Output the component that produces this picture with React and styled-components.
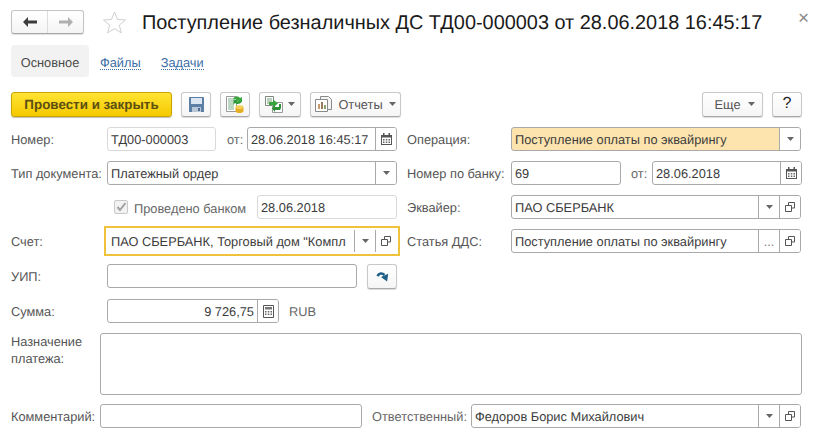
import React from 'react'
import styled, { createGlobalStyle } from 'styled-components'

const GlobalStyle = createGlobalStyle`
  html, body {
    margin: 0;
    background: #fff;
  }
  body {
    font-family: "Liberation Sans", Arial, sans-serif;
    font-size: 12.8px;
    color: #4d4d4d;
    text-rendering: geometricPrecision;
  }
`

const Page = styled.div`
  width: 818px;
  height: 438px;
  box-sizing: border-box;
  padding: 10px 16px 0 11px;
  overflow: hidden;
`

const Header = styled.header`
  display: flex;
  align-items: center;
  height: 24px;
`

const NavGroup = styled.div`
  display: flex;
  width: 73px;
  height: 24px;
  box-sizing: border-box;
  border: 1px solid #c4c4c4;
  border-bottom-color: #a6a6a6;
  border-radius: 3px;
  background: linear-gradient(#fff, #f4f4f4);
  box-shadow: 0 1px 1px rgba(0, 0, 0, 0.12);
`

const NavButton = styled.div`
  flex: 1;
  display: flex;
  align-items: center;
  justify-content: center;
  & + & {
    border-left: 1px solid #dcdcdc;
  }
`

const StarBox = styled.div`
  margin-left: 18px;
  width: 25px;
  height: 25px;
`

const Title = styled.h1`
  margin: 1px 0 0 15px;
  font-size: 19.9px;
  font-weight: 400;
  line-height: 24px;
  color: #1a1a1a;
  white-space: nowrap;
`

const Close = styled.div`
  margin-left: auto;
  margin-right: -7px;
  margin-top: -6px;
  font-size: 19px;
  line-height: 14px;
  color: #8a8a8a;
`

const Tabs = styled.nav`
  display: flex;
  align-items: center;
  margin-top: 11px;
  height: 32px;
`

const ActiveTab = styled.div`
  width: 78px;
  height: 32px;
  line-height: 35px;
  text-align: center;
  background: #f2f2f2;
  border-radius: 4px;
  color: #4a4a4a;
`

const TabLink = styled.a`
  margin-left: ${p => p.$gap}px;
  color: #3a6ea5;
  border-bottom: 1px dotted #3a6ea5;
  line-height: 13px;
  margin-top: 4px;
`

const Toolbar = styled.div`
  display: flex;
  align-items: center;
  margin-top: 14px;
  height: 26px;
`

const PrimaryButton = styled.div`
  width: 161px;
  height: 25px;
  box-sizing: border-box;
  border: 1px solid #c9a400;
  border-radius: 3px;
  background: linear-gradient(#ffe433, #f5c900);
  box-shadow: 0 1px 1px rgba(0, 0, 0, 0.25);
  color: #5c4f10;
  font-weight: 700;
  font-size: 13.4px;
  line-height: 24px;
  text-align: center;
`

const ToolButton = styled.div`
  display: flex;
  align-items: center;
  justify-content: center;
  gap: ${p => p.$gap || 0}px;
  flex: none;
  width: ${p => p.$w}px;
  height: 25px;
  margin-left: ${p => p.$gap2 ?? 9}px;
  padding-left: ${p => p.$pl || 0}px;
  box-sizing: border-box;
  border: 1px solid #c8c8c8;
  border-bottom-color: #a8a8a8;
  border-radius: 3px;
  background: linear-gradient(#fff, #f5f5f5);
  box-shadow: 0 1px 1px rgba(0, 0, 0, 0.14);
  color: #555;
`

const Spacer = styled.div`
  flex: 1;
`

const HelpMark = styled.span`
  font-size: 16px;
  color: #222;
`

const Columns = styled.div`
  display: flex;
  margin-top: 10px;
`

const LeftColumn = styled.div`
  width: 386px;
  flex: none;
`

const RightColumn = styled.div`
  margin-left: 10px;
  width: 395px;
  flex: none;
`

const Row = styled.div`
  display: flex;
  align-items: flex-start;
  height: ${p => p.$h || 34}px;
`

const Label = styled.label`
  flex: none;
  width: ${p => p.$w}px;
  line-height: 26px;
  color: #555;
  white-space: nowrap;
`

const Field = styled.div`
  display: flex;
  flex: none;
  width: ${p => p.$w}px;
  height: 24px;
  margin-left: ${p => p.$ml || 0}px;
  box-sizing: border-box;
  border: 1px solid ${p => (p.$focus ? 'transparent' : p.$soft ? '#d9d9d9' : '#a9a9a9')};
  border-radius: ${p => (p.$focus ? 0 : 3)}px;
  background: ${p => p.$bg || '#fff'};
  outline: ${p => (p.$focus ? '2px solid #f0c23c' : 'none')};
  outline-offset: 1px;
`

const Value = styled.div`
  flex: 1;
  min-width: 0;
  padding: 0 ${p => (p.$right ? 3 : 0)}px 0 3px;
  line-height: 24px;
  color: #3c3c3c;
  text-align: ${p => (p.$right ? 'right' : 'left')};
  white-space: nowrap;
  overflow: hidden;
`

const FieldButton = styled.div`
  flex: none;
  width: 20px;
  display: flex;
  align-items: center;
  justify-content: center;
  border-left: 1px solid #a9a9a9;
  border-radius: 0 2px 2px 0;
  background: #fff;
  color: #777;
`

const Small = styled.span`
  line-height: 26px;
  color: #666;
  margin-left: ${p => p.$ml}px;
  width: ${p => p.$w}px;
  flex: none;
  white-space: nowrap;
`

const CheckWrap = styled.div`
  display: flex;
  align-items: center;
  height: 26px;
  margin-left: 96px;
  width: 150px;
  padding-left: 7px;
  box-sizing: border-box;
  flex: none;
  color: #666;
  white-space: nowrap;
`

const CheckBox = styled.div`
  width: 14px;
  height: 14px;
  margin-right: 6px;
  margin-top: -2px;
  box-sizing: border-box;
  border: 1px solid #c8c8c8;
  border-radius: 2px;
  background: #f2f2f2;
  display: flex;
  align-items: center;
  justify-content: center;
`

const TextArea = styled.div`
  width: 702px;
  height: 62px;
  box-sizing: border-box;
  border: 1px solid #a9a9a9;
  border-radius: 3px;
`

const NoteLabel = styled.div`
  width: 89px;
  flex: none;
  padding-top: 1px;
  line-height: 16.5px;
  color: #555;
`

const Caret = () => (
  <svg width="7" height="4" viewBox="0 0 7 4">
    <path d="M0 0h7L3.500 4z" fill="#666" />
  </svg>
)

const ArrowLeft = () => (
  <svg width="14" height="10" viewBox="0 0 14 10">
    <path d="M0 5l5-5v3.500h9v3H5V10z" fill="#3c3c3c" />
  </svg>
)

const ArrowRight = () => (
  <svg width="14" height="10" viewBox="0 0 14 10">
    <path d="M14 5L9 0v3.500H0v3h9V10z" fill="#b0b0b0" />
  </svg>
)

const Star = () => (
  <svg width="25" height="25" viewBox="0 0 25 25">
    <path
      d="M12.500 2l3 7.400 8 .6-6.200 5.100 2 7.800-6.800-4.300-6.800 4.300 2-7.800L1.500 10l8-.6z"
      fill="#fff"
      stroke="#cfcfcf"
    />
  </svg>
)

const OpenIcon = () => (
  <svg width="10" height="10" viewBox="0 0 10 10" fill="none" stroke="#555">
    <path d="M3.500 3.500V.5h6v5.500h-3" />
    <path d="M.5 3.500h6v6H.5z" />
  </svg>
)

const CalendarIcon = () => (
  <svg width="11" height="12" viewBox="0 0 11 12">
    <path d="M0 2h11v10H0z" fill="#555" />
    <path d="M1 4.500h9V11H1z" fill="#fff" />
    <path d="M2 0h1.500v3H2zM7.500 0H9v3H7.500z" fill="#555" />
    <path d="M2 6h1.500v1.500H2zM4.800 6h1.500v1.500H4.800zM7.500 6H9v1.500H7.500zM2 8.500h1.500V10H2zM4.800 8.500h1.500V10H4.800zM7.500 8.500H9V10H7.500z" fill="#666" />
  </svg>
)

const CalcIcon = () => (
  <svg width="11" height="13" viewBox="0 0 11 13">
    <path d="M.5.500h10v12H.5z" fill="#fff" stroke="#555" />
    <path d="M2 2h7v2.500H2z" fill="#777" />
    <path d="M2 6h1.500v1.500H2zM4.800 6h1.500v1.500H4.800zM7.500 6H9v1.500H7.500zM2 8.500h1.500V10H2zM4.800 8.500h1.500V10H4.800zM7.500 8.500H9V10H7.500z" fill="#666" />
  </svg>
)

const SaveIcon = () => (
  <svg width="15" height="15" viewBox="0 0 15 15">
    <path d="M0 1a1 1 0 0 1 1-1h13a1 1 0 0 1 1 1v14H0z" fill="#5c7fa6" />
    <path d="M2 1h11v6H2z" fill="#dbe6f0" />
    <path d="M3 10h9v5H3z" fill="#b9c8d8" />
    <path d="M9 11h2v3H9z" fill="#4d6c8f" />
  </svg>
)

const PostIcon = () => (
  <svg width="18" height="17" viewBox="0 0 18 17">
    <path d="M.5.500h10v15H.5z" fill="#fff" stroke="#9a9a9a" />
    <path d="M2 3h7M2 5h7M2 7h6M2 9h6M2 11h6M2 13h6" stroke="#7fb08a" />
    <path d="M7 3c2-3 5-3 7-1l2-1v5h-5l1.500-1.500C11 3.500 9 3.500 7 3z" fill="#39a83e" />
    <path d="M16 5c-1 3-5 4-7 2L7.500 8.500V4h5l-1.500 1.500c1.500 1 3.500.5 5-.5z" fill="#2c9a38" />
    <ellipse cx="13.500" cy="11" rx="4" ry="1.800" fill="#f4cf50" />
    <path d="M9.500 11v4.200c0 1 1.800 1.800 4 1.800s4-.8 4-1.800V11c0 1-1.800 1.800-4 1.800s-4-.8-4-1.800z" fill="#e6ae22" />
  </svg>
)

const LinkedIcon = () => (
  <svg width="18" height="17" viewBox="0 0 18 17">
    <path d="M.5.500h8v9h-8z" fill="#fff" stroke="#7b8a7b" />
    <path d="M2 3h5M2 5h5M2 7h3" stroke="#7aa07a" />
    <path d="M7.500 6.500h10v10h-10z" fill="#fff" stroke="#9a9a9a" />
    <path d="M4 6h4V3.500l5 4-5 4V9H4z" fill="#37a53c" />
    <path d="M14 8v3h-4V9l-3 3.500 3 3.500v-2h5l1-2V8z" fill="#2c9136" />
  </svg>
)

const ReportIcon = () => (
  <svg width="17" height="16" viewBox="0 0 17 16">
    <path d="M5.500.500h8l3 3v10h-11z" fill="#f4f4f4" stroke="#8a8a8a" />
    <path d="M.5 3.500h12v12H.5z" fill="#fff" stroke="#8a8a8a" />
    <path d="M3 8h2v5H3z" fill="#c99a6a" />
    <path d="M6 6h2v7H6z" fill="#9a7a5a" />
    <path d="M9 9h2v4H9z" fill="#8aa06a" />
  </svg>
)

const CheckMark = () => (
  <svg width="11" height="10" viewBox="0 0 11 10">
    <path d="M1.500 5l2.500 3 5.500-7" fill="none" stroke="#a0a0a0" strokeWidth="2" />
  </svg>
)

const BlueArrow = () => (
  <svg width="13" height="11" viewBox="0 0 17 14">
    <path d="M2 6.500C4 2.500 8 2 11 5" fill="none" stroke="#1d5f86" strokeWidth="3.500" />
    <path d="M6.500 7.500L16 3.500l-1.500 10z" fill="#1d5f86" />
  </svg>
)

const DropButton = () => (
  <FieldButton>
    <Caret />
  </FieldButton>
)

const OpenButton = () => (
  <FieldButton>
    <OpenIcon />
  </FieldButton>
)

export default function App() {
  return (
    <Page>
      <GlobalStyle />
      <Header>
        <NavGroup>
          <NavButton>
            <ArrowLeft />
          </NavButton>
          <NavButton>
            <ArrowRight />
          </NavButton>
        </NavGroup>
        <StarBox>
          <Star />
        </StarBox>
        <Title>Поступление безналичных ДС ТД00-000003 от 28.06.2018 16:45:17</Title>
        <Close>×</Close>
      </Header>

      <Tabs>
        <ActiveTab>Основное</ActiveTab>
        <TabLink $gap={11}>Файлы</TabLink>
        <TabLink $gap={20}>Задачи</TabLink>
      </Tabs>

      <Toolbar>
        <PrimaryButton>Провести и закрыть</PrimaryButton>
        <ToolButton $w={30}>
          <SaveIcon />
        </ToolButton>
        <ToolButton $w={30}>
          <PostIcon />
        </ToolButton>
        <ToolButton $w={42} $gap={5}>
          <LinkedIcon />
          <Caret />
        </ToolButton>
        <ToolButton $w={91} $gap={6}>
          <ReportIcon />
          Отчеты
          <Caret />
        </ToolButton>
        <Spacer />
        <ToolButton $w={61} $gap={7} $pl={4}>
          Еще
          <Caret />
        </ToolButton>
        <ToolButton $w={30}>
          <HelpMark>?</HelpMark>
        </ToolButton>
      </Toolbar>

      <Columns>
        <LeftColumn>
          <Row>
            <Label $w={96}>Номер:</Label>
            <Field $w={109} $soft>
              <Value>ТД00-000003</Value>
            </Field>
            <Small $ml={11} $w={20}>от:</Small>
            <Field $w={150}>
              <Value>28.06.2018 16:45:17</Value>
              <FieldButton>
                <CalendarIcon />
              </FieldButton>
            </Field>
          </Row>
          <Row>
            <Label $w={96}>Тип документа:</Label>
            <Field $w={290}>
              <Value>Платежный ордер</Value>
              <DropButton />
            </Field>
          </Row>
          <Row>
            <CheckWrap>
              <CheckBox>
                <CheckMark />
              </CheckBox>
              Проведено банком
            </CheckWrap>
            <Field $w={140} $soft>
              <Value>28.06.2018</Value>
            </Field>
          </Row>
          <Row $h={35}>
            <Label $w={96}>Счет:</Label>
            <Field $w={290} $focus>
              <Value>ПАО СБЕРБАНК, Торговый дом "Компл</Value>
              <DropButton />
              <OpenButton />
            </Field>
          </Row>
          <Row $h={35}>
            <Label $w={96}>УИП:</Label>
            <Field $w={250} />
            <ToolButton $w={30} $gap2={10}>
              <BlueArrow />
            </ToolButton>
          </Row>
          <Row>
            <Label $w={96}>Сумма:</Label>
            <Field $w={172}>
              <Value $right>9 726,75</Value>
              <FieldButton>
                <CalcIcon />
              </FieldButton>
            </Field>
            <Small $ml={10} $w={40}>RUB</Small>
          </Row>
        </LeftColumn>

        <RightColumn>
          <Row>
            <Label $w={104}>Операция:</Label>
            <Field $w={290} $bg="#fde4ae">
              <Value>Поступление оплаты по эквайрингу</Value>
              <DropButton />
            </Field>
          </Row>
          <Row>
            <Label $w={104}>Номер по банку:</Label>
            <Field $w={110}>
              <Value>69</Value>
            </Field>
            <Small $ml={10} $w={21}>от:</Small>
            <Field $w={150}>
              <Value>28.06.2018</Value>
              <FieldButton>
                <CalendarIcon />
              </FieldButton>
            </Field>
          </Row>
          <Row>
            <Label $w={104}>Эквайер:</Label>
            <Field $w={290}>
              <Value>ПАО СБЕРБАНК</Value>
              <DropButton />
              <OpenButton />
            </Field>
          </Row>
          <Row>
            <Label $w={104}>Статья ДДС:</Label>
            <Field $w={290}>
              <Value>Поступление оплаты по эквайрингу</Value>
              <FieldButton>...</FieldButton>
              <OpenButton />
            </Field>
          </Row>
        </RightColumn>
      </Columns>

      <Row $h={71}>
        <NoteLabel>
          Назначение
          <br />
          платежа:
        </NoteLabel>
        <TextArea />
      </Row>

      <Row>
        <Label $w={89}>Комментарий:</Label>
        <Field $w={262} />
        <Small $ml={10} $w={99}>Ответственный:</Small>
        <Field $w={330}>
          <Value>Федоров Борис Михайлович</Value>
          <DropButton />
          <OpenButton />
        </Field>
      </Row>
    </Page>
  )
}
